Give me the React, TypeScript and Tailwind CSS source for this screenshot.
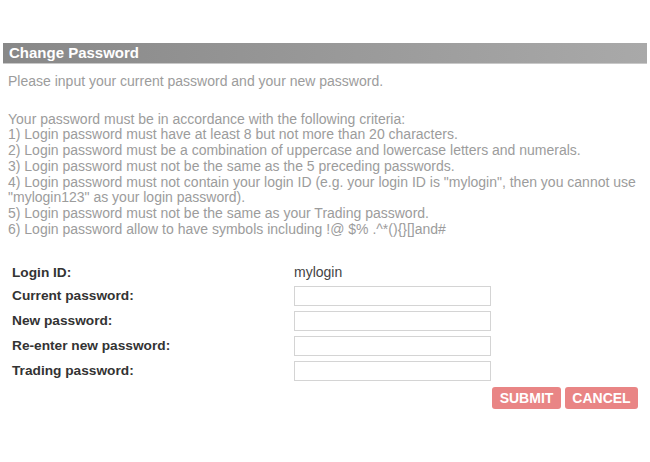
export default function App() {
  const rules = [
    "1) Login password must have at least 8 but not more than 20 characters.",
    "2) Login password must be a combination of uppercase and lowercase letters and numerals.",
    "3) Login password must not be the same as the 5 preceding passwords.",
    '4) Login password must not contain your login ID (e.g. your login ID is "mylogin", then you cannot use "mylogin123" as your login password).',
    "5) Login password must not be the same as your Trading password.",
    "6) Login password allow to have symbols including !@ $% .^*(){}[]and#",
  ];
  const fields = ["Current password:", "New password:", "Re-enter new password:", "Trading password:"];

  return (
    <div className="min-h-screen bg-white pt-[43px] font-['Liberation_Sans',Arial,sans-serif]">
      <div className="mx-[3px] h-[21px] border-b border-[#c8c8c8] bg-gradient-to-r from-[#888888] to-[#a9a9a9] pl-[6px] text-[15px] font-bold leading-[20px] text-white">
        Change Password
      </div>
      <div className="px-[8px] text-[14px] leading-[15.7px] text-[#9c9c9c]">
        <p className="mt-[10px]">Please input your current password and your new password.</p>
        <p className="mt-[22px] w-[636px]">Your password must be in accordance with the following criteria:</p>
        {rules.map((r) => (
          <p key={r} className="w-[636px]">
            {r}
          </p>
        ))}
      </div>
      <form className="mt-[27px] pl-[12px] pr-[12px] text-[13.7px] text-[#333]">
        <div className="flex h-[17px] items-center">
          <span className="w-[282px] font-bold">Login ID:</span>
          <span className="text-[14px] text-[#444]">mylogin</span>
        </div>
        {fields.map((f) => (
          <div key={f} className="mt-[5px] flex h-[20px] items-center">
            <span className="w-[282px] font-bold">{f}</span>
            <input type="password" className="h-[20px] w-[197px] border border-[#d4d4d4] bg-white" />
          </div>
        ))}
        <div className="mt-[6px] flex justify-end gap-[4px] pr-0">
          <button type="button" className="h-[22px] w-[69px] rounded-[3px] bg-[#e98585] text-[14px] font-bold text-white">
            SUBMIT
          </button>
          <button type="button" className="h-[22px] w-[73px] rounded-[3px] bg-[#e98585] text-[14px] font-bold text-white">
            CANCEL
          </button>
        </div>
      </form>
    </div>
  );
}
